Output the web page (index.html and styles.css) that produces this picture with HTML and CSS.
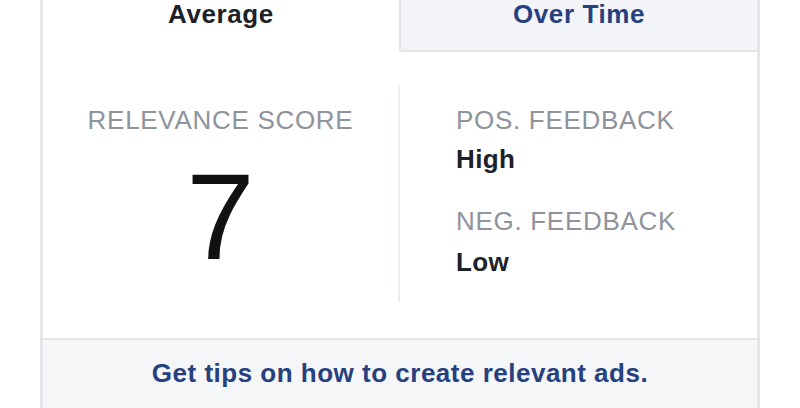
FILE: index.html
```html
<!DOCTYPE html>
<html>
<head>
<meta charset="utf-8">
<link rel="stylesheet" href="styles.css">
</head>
<body>
<div class="card">
  <div class="tabs">
    <div class="tab tab-active">Average</div>
    <div class="tab tab-inactive">Over Time</div>
  </div>
  <div class="content">
    <div class="score-col">
      <div class="label">RELEVANCE SCORE</div>
      <div class="score">7</div>
    </div>
    <div class="feedback-col">
      <div class="label">POS. FEEDBACK</div>
      <div class="value value-first">High</div>
      <div class="label label-second">NEG. FEEDBACK</div>
      <div class="value value-second">Low</div>
    </div>
  </div>
  <div class="footer">Get tips on how to create relevant ads.</div>
</div>
</body>
</html>
```
FILE: styles.css
```css
html, body {
  margin: 0;
  padding: 0;
  background: #ffffff;
}
body {
  font-family: "Liberation Sans", Arial, sans-serif;
  width: 800px;
  height: 408px;
  overflow: hidden;
}
.card {
  margin-left: 40px;
  width: 714px;
  height: 408px;
  border-left: 3px solid #e5e6ea;
  border-right: 3px solid #e5e6ea;
  display: flex;
  flex-direction: column;
  background: #ffffff;
}
.tabs {
  display: flex;
  height: 52px;
  flex: none;
}
.tab {
  flex: 1;
  text-align: center;
  font-size: 26px;
  line-height: 28px;
  font-weight: bold;
  letter-spacing: 0.6px;
}
.tab-active {
  color: #1d2129;
  background: #ffffff;
}
.tab-inactive {
  color: #27407e;
  background: #f3f4f7;
  border-left: 2px solid #e5e6ea;
  border-bottom: 2px solid #e5e6ea;
}
.content {
  display: flex;
  flex: 1;
}
.score-col {
  width: 355px;
  text-align: center;
  padding-top: 52.5px;
}
.label {
  font-size: 26px;
  line-height: 30px;
  color: #8e939c;
  letter-spacing: 0.7px;
  white-space: nowrap;
}
.score {
  margin-top: 20px;
  font-size: 123px;
  line-height: 1;
  color: #111111;
}
.feedback-col {
  flex: 1;
  margin: 33px 0 36px;
  border-left: 2px solid #eceef1;
  padding-left: 56px;
  padding-top: 19.5px;
}
.value {
  font-size: 26px;
  line-height: 30px;
  font-weight: bold;
  color: #1d2129;
  letter-spacing: 0.4px;
}
.value-first {
  margin-top: 9px;
}
.label-second {
  margin-top: 32px;
}
.value-second {
  margin-top: 11px;
}
.footer {
  flex: none;
  height: 70px;
  border-top: 2px solid #e5e6ea;
  background: #f5f6f8;
  text-align: center;
  box-sizing: border-box;
  padding-top: 18px;
  font-size: 26px;
  line-height: 30px;
  font-weight: bold;
  letter-spacing: 0.5px;
  color: #27407e;
}
```
